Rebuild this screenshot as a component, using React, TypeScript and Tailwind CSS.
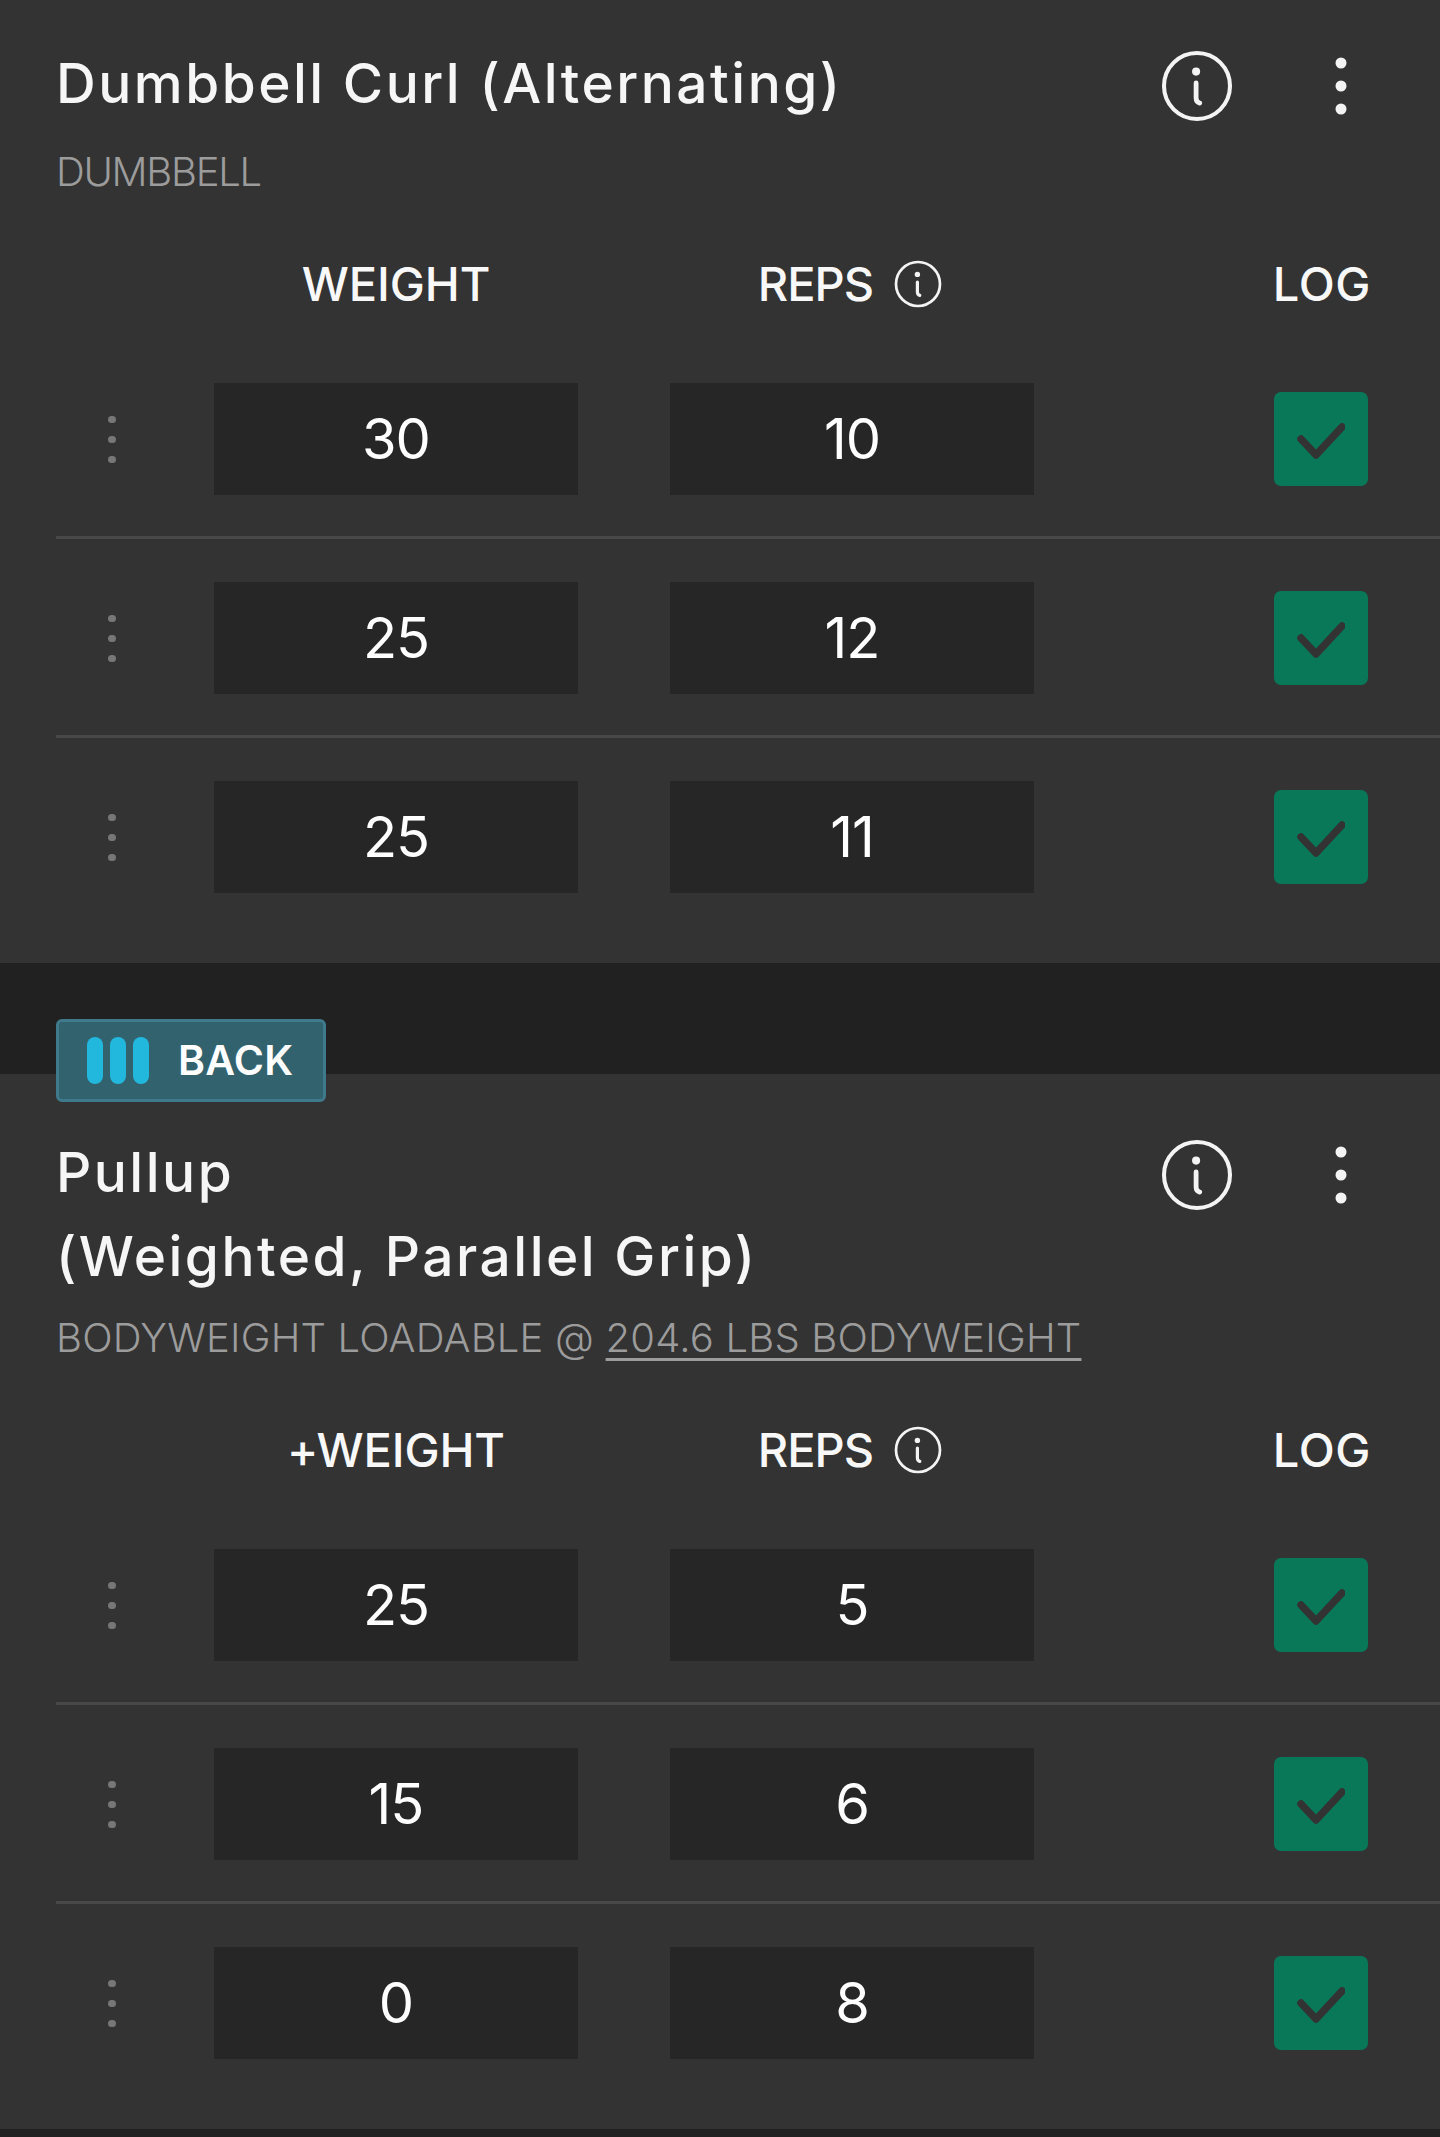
import React from "react";

type SetRow = { weight: string; reps: string };

const font = "font-['Inter',sans-serif]";

const InfoIcon = ({ className }: { className: string }) => (
  <svg viewBox="0 0 24 24" fill="none" stroke="currentColor" strokeLinecap="round" className={className}>
    <circle cx="12" cy="12" r="11" strokeWidth="1.35" />
    <circle cx="11.7" cy="7.2" r="1.35" fill="currentColor" stroke="none" />
    <path d="M11.7 11v5c0 1 .5 1.5 1.2 1.7" strokeWidth="1.6" />
  </svg>
);

const Kebab = () => (
  <svg viewBox="0 0 24 58" className="w-[24px] h-[58px] text-[#f4f4f4]" fill="currentColor">
    <ellipse cx="12" cy="6" rx="5.5" ry="5.5" />
    <ellipse cx="12" cy="29" rx="5.5" ry="5.5" />
    <ellipse cx="12" cy="52" rx="5.5" ry="5.5" />
  </svg>
);

const Handle = () => (
  <div className="w-[158px] shrink-0 flex flex-col gap-[13px] pl-[52px]">
    <span className="w-[8px] h-[7px] rounded-full bg-[#777777]" />
    <span className="w-[8px] h-[7px] rounded-full bg-[#777777]" />
    <span className="w-[8px] h-[7px] rounded-full bg-[#777777]" />
  </div>
);

const Value = ({ value }: { value: string }) => (
  <div className="w-[364px] h-[112px] shrink-0 bg-[#262626] flex items-center justify-center text-[56px] text-white tracking-[-1px]">
    {value}
  </div>
);

const LogButton = () => (
  <div className="w-[94px] h-[94px] rounded-[7px] bg-[#087858] flex items-center justify-center">
    <svg viewBox="0 0 48 36" className="w-[48px] h-[36px] mt-[3px]" fill="none" stroke="#333333" strokeWidth="7.5" strokeLinecap="round" strokeLinejoin="round">
      <path d="M4 16l15 16L45 4" />
    </svg>
  </div>
);

const Row = ({ row, last }: { row: SetRow; last: boolean }) => (
  <div className={`flex items-center pl-[56px] pr-[72px] ${last ? "pt-[43px] pb-[70px]" : "pt-[43px] pb-[44px] relative"}`}>
    {!last && <div className="absolute left-[56px] right-0 bottom-0 h-[3px] bg-[#484848]" />}
    <Handle />
    <Value value={row.weight} />
    <div className="w-[92px] shrink-0" />
    <Value value={row.reps} />
    <div className="ml-auto">
      <LogButton />
    </div>
  </div>
);

const Card = ({
  title,
  subtitle,
  weightLabel,
  rows,
  className,
  subClass,
  children,
}: {
  title: React.ReactNode;
  subtitle: React.ReactNode;
  weightLabel: string;
  rows: SetRow[];
  className: string;
  subClass: string;
  children?: React.ReactNode;
}) => (
  <section className={`relative bg-[#333333] ${className}`}>
    {children}
    <div className="flex pl-[56px] pr-[87px]">
      <h2 className="flex-1 text-[55px] leading-[84px] font-medium text-[#f6f6f6] tracking-[2.5px]">{title}</h2>
      <div className="flex items-start mt-[9px]">
        <InfoIcon className="w-[72px] h-[72px] text-[#f4f4f4]" />
        <div className="ml-[96px] mt-[7px]">
          <Kebab />
        </div>
      </div>
    </div>
    <div className={`pl-[56px] text-[40px] leading-[50px] font-light text-[#9c9c9c] ${subClass}`}>{subtitle}</div>
    <div className="flex items-center pl-[214px] pr-[72px] h-[60px] mt-[57px] mb-[26px] text-[47px] font-medium text-[#f8f8f8] tracking-[-0.1px]">
      <div className="w-[364px] text-center">{weightLabel}</div>
      <div className="w-[92px]" />
      <div className="w-[364px] pr-[4px] flex items-center justify-center gap-[21px]">
        <span className="tracking-[-1px]">REPS</span>
        <InfoIcon className="w-[48px] h-[48px] text-[#f4f4f4]" />
      </div>
      <div className="ml-auto mr-[-3px] tracking-[0.6px]">LOG</div>
    </div>
    {rows.map((row, i) => (
      <Row key={i} row={row} last={i === rows.length - 1} />
    ))}
  </section>
);

export default function App() {
  return (
    <div className={`${font} bg-[#212121] h-[2137px] overflow-hidden`}>
      <Card
        title="Dumbbell Curl (Alternating)"
        subtitle="DUMBBELL"
        weightLabel="WEIGHT"
        className="pt-[41px]"
        subClass="mt-[22px] tracking-[-1.3px]"
        rows={[
          { weight: "30", reps: "10" },
          { weight: "25", reps: "12" },
          { weight: "25", reps: "11" },
        ]}
      />
      <div className="h-[111px]" />
      <Card
        title={
          <>
            Pullup
            <br />
            (Weighted, Parallel Grip)
          </>
        }
        subtitle={
          <>
            BODYWEIGHT LOADABLE @ <span className="underline underline-offset-[6px] decoration-[3px]">204.6 LBS BODYWEIGHT</span>
          </>
        }
        weightLabel="+WEIGHT"
        className="pt-[56px]"
        subClass="mt-[15px] tracking-[0.2px]"
        rows={[
          { weight: "25", reps: "5" },
          { weight: "15", reps: "6" },
          { weight: "0", reps: "8" },
        ]}
      >
        <div className="absolute left-[56px] top-[-55px] w-[270px] h-[83px] rounded-[6px] border-[3px] border-[#3f7a8c] bg-[#33626f] flex items-center pl-[28px]">
          <div className="flex gap-[7px]">
            <span className="w-[16px] h-[47px] rounded-full bg-[#22b8dd]" />
            <span className="w-[16px] h-[47px] rounded-full bg-[#22b8dd]" />
            <span className="w-[16px] h-[47px] rounded-full bg-[#22b8dd]" />
          </div>
          <span className="ml-[29px] text-[41px] font-semibold text-white tracking-[0.3px]">BACK</span>
        </div>
      </Card>
    </div>
  );
}
